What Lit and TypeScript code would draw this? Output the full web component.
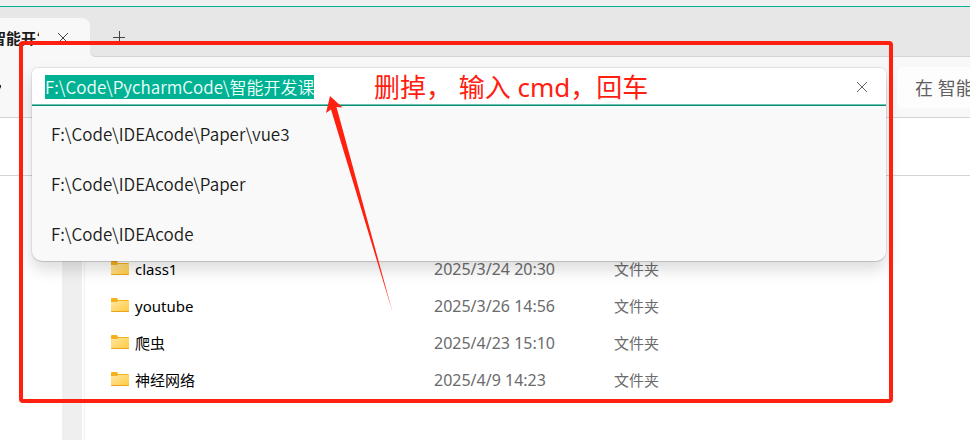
import { LitElement, html, css, svg } from "lit";
import { customElement, property, query } from "lit/decorators.js";

interface Entry {
  name: string;
  modified: string;
  kind: string;
}

const ENTRIES: Entry[] = [
  { name: "class1", modified: "2025/3/24 20:30", kind: "文件夹" },
  { name: "youtube", modified: "2025/3/26 14:56", kind: "文件夹" },
  { name: "爬虫", modified: "2025/4/23 15:10", kind: "文件夹" },
  { name: "神经网络", modified: "2025/4/9 14:23", kind: "文件夹" },
];

const SUGGESTIONS = [
  "F:\\Code\\IDEAcode\\Paper\\vue3",
  "F:\\Code\\IDEAcode\\Paper",
  "F:\\Code\\IDEAcode",
];

const cross = svg`<path d="M1 1 11 11M11 1 1 11" fill="none" stroke="currentColor" stroke-width="1"/>`;

@customElement("address-bar")
class AddressBar extends LitElement {
  @property() value = "";
  @property({ type: Array }) suggestions: string[] = [];
  @query("input") field!: HTMLInputElement;

  static styles = css`
    :host {
      display: block;
      position: relative;
      min-width: 0;
      height: 38px;
      z-index: 2;
      font-family: "Noto Sans CJK SC", sans-serif;
      font-size: 17px;
      font-weight: 350;
    }
    .panel {
      position: absolute;
      left: 0;
      right: 0;
      top: 0;
      background: #f9f9f9;
      border-radius: 6px 6px 10px 10px;
      overflow: hidden;
      box-shadow: 0 0 0 1px rgba(0, 0, 0, 0.07), 0 1px 0 rgba(0, 0, 0, 0.08),
        0 8px 16px rgba(0, 0, 0, 0.15);
    }
    .row {
      display: flex;
      align-items: center;
      height: 37px;
      padding: 0 12px;
      background: #fff;
      border-bottom: 1px solid #0c8a72;
      box-shadow: inset 0 -1px 0 #6cc4b3;
    }
    input {
      flex: 1;
      min-width: 0;
      height: 24px;
      padding: 0 1px;
      border: 0;
      outline: 0;
      background: transparent;
      font: inherit;
      line-height: 24px;
      color: #1b1b1b;
      caret-color: transparent;
    }
    input::selection {
      background: #00b294;
      color: #f0fffb;
    }
    button {
      display: grid;
      place-items: center;
      width: 24px;
      height: 24px;
      padding: 0;
      border: 0;
      background: none;
      color: #666;
    }
    ul {
      list-style: none;
      margin: 0;
      padding: 4px 0 1px;
    }
    li {
      height: 50px;
      padding: 0 19px;
      line-height: 48px;
      color: #1b1b1b;
      white-space: nowrap;
    }
  `;

  firstUpdated() {
    this.field.focus();
    this.field.select();
  }

  render() {
    return html`
      <div class="panel">
        <div class="row">
          <input type="text" aria-label="地址" .value=${this.value} spellcheck="false" />
          <button aria-label="关闭">
            <svg width="12" height="12" viewBox="0 0 12 12">${cross}</svg>
          </button>
        </div>
        <ul>
          ${this.suggestions.map((s) => html`<li>${s}</li>`)}
        </ul>
      </div>
    `;
  }
}

@customElement("file-list")
class FileList extends LitElement {
  @property({ type: Array }) entries: Entry[] = [];

  static styles = css`
    :host {
      display: block;
      padding: 74px 0 20px 26px;
      font-size: 15px;
    }
    table {
      border-collapse: collapse;
      table-layout: fixed;
      width: 100%;
    }
    td {
      height: 37px;
      padding: 0;
      line-height: 20px;
      color: #6b6b6b;
      white-space: nowrap;
    }
    .name {
      width: 323px;
    }
    .modified {
      width: 180px;
      font-size: 16px;
    }
    .label {
      display: flex;
      align-items: center;
      gap: 6px;
      color: #000;
    }
    svg {
      flex: none;
    }
  `;

  render() {
    return html`
      <table>
        <tbody>
          ${this.entries.map(
            (e) => html`<tr>
              <td class="name">
                <span class="label">
                  <svg width="18" height="18" viewBox="0 0 18 18">
                    <defs>
                      <linearGradient id="front" x1="0" y1="0" x2="1" y2="1">
                        <stop offset="0" stop-color="#ffe7a3" />
                        <stop offset="1" stop-color="#ffc93c" />
                      </linearGradient>
                    </defs>
                    <path d="M0 2a1 1 0 0 1 1-1h5l1 2h10a1 1 0 0 1 1 1v3H0z" fill="#f5b01c" />
                    <path d="M0 5h6l1-1h11v10a1 1 0 0 1-1 1H1a1 1 0 0 1-1-1z" fill="url(#front)" />
                    <path d="M0 14h18a1 1 0 0 1-1 1H1a1 1 0 0 1-1-1z" fill="#eba51c" />
                  </svg>
                  ${e.name}
                </span>
              </td>
              <td class="modified">${e.modified}</td>
              <td>${e.kind}</td>
            </tr>`
          )}
        </tbody>
      </table>
    `;
  }
}

@customElement("app-root")
class AppRoot extends LitElement {
  static styles = css`
    :host {
      display: flex;
      flex-direction: column;
      position: relative;
      min-height: 100vh;
      overflow: hidden;
      background: #fff;
      color: #1b1b1b;
      font-family: "Noto Sans", "Noto Sans CJK SC", sans-serif;
      font-size: 18px;
    }
    .behind {
      height: 6px;
      background: #f0f0f0;
      border-bottom: 1px solid #00b294;
    }
    .tabs {
      display: flex;
      align-items: flex-end;
      height: 50px;
      background: linear-gradient(#e7e7e7 50%, #f8f8f8 50%);
    }
    .tab {
      display: flex;
      align-items: center;
      width: 90px;
      height: 39px;
      background: #f8f8f8;
      border-radius: 0 8px 0 0;
    }
    .strip {
      flex: 1;
      box-sizing: border-box;
      height: 50px;
      padding-top: 11px;
      background: #e7e7e7;
      border-bottom: 1px solid #d4d4d4;
      border-radius: 0 0 0 5px;
    }
    .title {
      display: flex;
      justify-content: flex-end;
      width: 39px;
      overflow: hidden;
      font-size: 15px;
      font-weight: 600;
      white-space: nowrap;
    }
    .title span {
      margin-right: -12px;
    }
    button {
      display: grid;
      place-items: center;
      padding: 0;
      border: 0;
      background: none;
      color: #444;
    }
    .close {
      width: 24px;
      height: 24px;
      margin-left: 12px;
    }
    .add {
      width: 32px;
      height: 38px;
      margin-left: 13px;
    }
    .toolbar {
      display: grid;
      grid-template-columns: 32px minmax(0, 1fr) 84px;
      align-items: start;
      height: 60px;
      background: #f8f8f8;
      border-bottom: 1px solid #d4d4d4;
    }
    .toolbar address-bar {
      margin-top: 11px;
    }
    .nav {
      height: 60px;
      place-items: center start;
    }
    .search {
      box-sizing: border-box;
      height: 41px;
      margin: 10px 0 0 11px;
      padding: 0 0 0 18px;
      border: 0;
      border-radius: 6px 0 0 6px;
      background: #fdfdfd;
      font: inherit;
      min-width: 0;
    }
    .search::placeholder {
      color: #606060;
      opacity: 1;
    }
    .commands {
      height: 57px;
      border-bottom: 1px solid #d4d4d4;
    }
    .body {
      display: flex;
      flex: 1;
    }
    .tree {
      width: 62px;
    }
    .scroll {
      width: 20px;
      margin-right: 2px;
      background: #efefef;
    }
    file-list {
      flex: 1;
      border-left: 1px solid #f0f0f0;
    }
    .marker {
      position: absolute;
      z-index: 3;
      inset: 41px 77px 37px 19px;
      border: 4px solid #ff2010;
      border-radius: 4px;
      pointer-events: none;
    }
    .note {
      position: absolute;
      z-index: 3;
      left: 374px;
      top: 70px;
      color: #ff2010;
      font-size: 26px;
      line-height: 34px;
      white-space: pre;
    }
    .arrow {
      position: absolute;
      z-index: 3;
      left: 320px;
      top: 90px;
    }
  `;

  render() {
    return html`
      <div class="behind"></div>
      <div class="tabs">
        <div class="tab">
          <div class="title"><span>智能开发</span></div>
          <button class="close" aria-label="关闭标签页">
            <svg width="12" height="12" viewBox="0 0 12 12">${cross}</svg>
          </button>
        </div>
        <div class="strip">
          <button class="add" aria-label="新建标签页">
            <svg width="12" height="12" viewBox="0 0 12 12">
              <path d="M0 6.5h12M6.5 0v12" fill="none" stroke="currentColor" />
            </svg>
          </button>
        </div>
      </div>
      <div class="toolbar">
        <button class="nav" aria-label="向上">
          <svg width="2" height="6" viewBox="0 0 2 6"><path d="M0 1h1v2L0 5z" fill="#222" /></svg>
        </button>
        <address-bar
          .value=${"F:\\Code\\PycharmCode\\智能开发课"}
          .suggestions=${SUGGESTIONS}
        ></address-bar>
        <input class="search" type="text" aria-label="搜索" placeholder="在 智能开发课 中搜索" />
      </div>
      <div class="commands"></div>
      <div class="body">
        <div class="tree"></div>
        <div class="scroll"></div>
        <file-list .entries=${ENTRIES}></file-list>
      </div>
      <div class="marker"></div>
      <div class="note">删掉， 输入 cmd，回车</div>
      <svg class="arrow" width="80" height="225" viewBox="0 0 80 225">
        <path d="M10 6 22.500 17.500 16.500 17 72.500 222 11 19.500 6 23z" fill="#ff2010" />
      </svg>
    `;
  }
}
